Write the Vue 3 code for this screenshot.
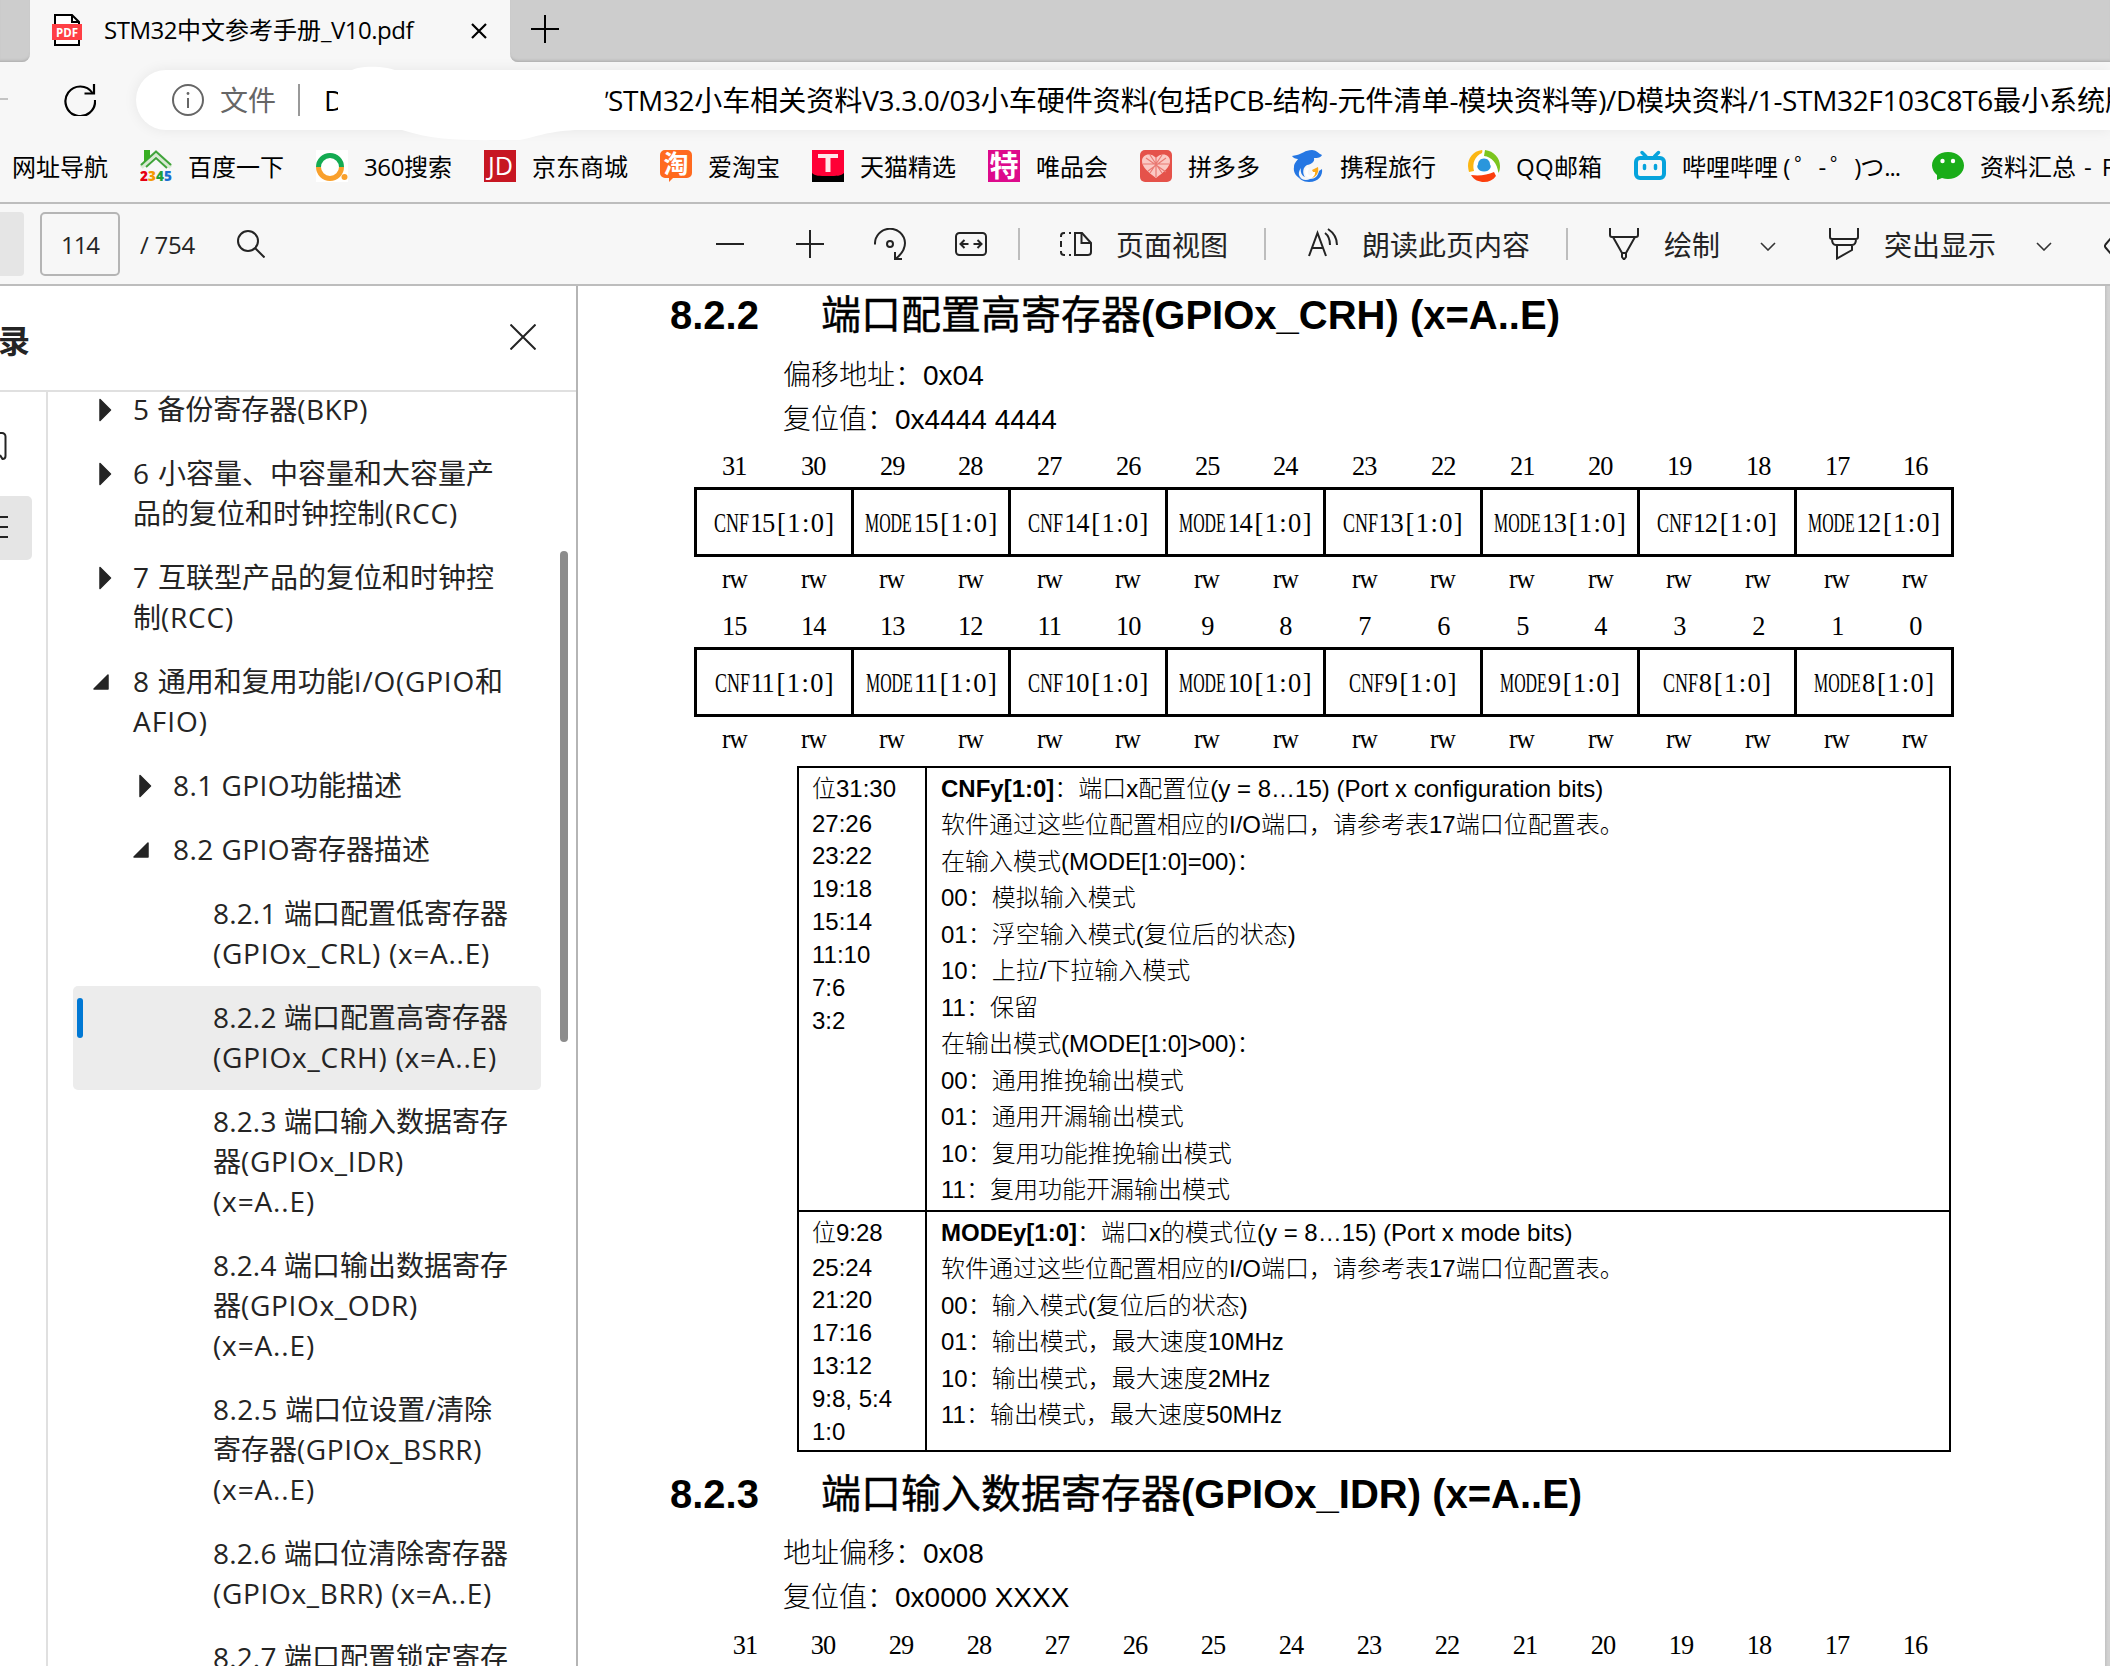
<script setup>
import { h, ref, onMounted } from 'vue'

// Text run whose Latin letters are tracked so that the line takes `w` pixels.
const Fit = {
  props: { t: String, w: Number },
  setup(props) {
    const el = ref(null)
    const parts = props.t.match(/[\x20-\x7e]+|[^\x20-\x7e]+/g)
    onMounted(() => {
      if (!props.w) return
      const spans = [...el.value.children]
      const latin = spans.filter((s) => /^[\x20-\x7e]/.test(s.textContent))
      const count = latin.reduce((n, s) => n + s.textContent.length, 0)
      if (!count) return
      const gap = (props.w - el.value.getBoundingClientRect().width) / count
      latin.forEach((s) => { s.style.letterSpacing = gap + 'px' })
    })
    return () => h('span', { ref: el, style: { whiteSpace: 'pre', display: 'inline-block' } }, parts.map((p) => h('span', p)))
  },
}

const bookmarks = [
  { icon: null, t: '网址导航' },
  { icon: '2345', t: '百度一下' },
  { icon: '360', t: '360搜索', w: 88 },
  { icon: 'jd', t: '京东商城' },
  { icon: 'tao', t: '爱淘宝' },
  { icon: 'tmall', t: '天猫精选' },
  { icon: 'vip', t: '唯品会' },
  { icon: 'pdd', t: '拼多多' },
  { icon: 'ctrip', t: '携程旅行' },
  { icon: 'qq', t: 'QQ邮箱', w: 86 },
  { icon: 'bili', t: '哔哩哔哩 ( ゜- ゜)つ...', w: 218 },
  { icon: 'wx', t: '资料汇总 - F', w: 136 },
]

const tree = [
  { lv: 1, a: 'c', lines: [['5 备份寄存器(BKP)', 235]] },
  { lv: 1, a: 'c', lines: [['6 小容量、中容量和大容量产', 361], ['品的复位和时钟控制(RCC)', 325]] },
  { lv: 1, a: 'c', lines: [['7 互联型产品的复位和时钟控', 361], ['制(RCC)', 101]] },
  { lv: 1, a: 'o', lines: [['8 通用和复用功能I/O(GPIO和', 370], ['AFIO)', 75]] },
  { lv: 2, a: 'c', lines: [['8.1 GPIO功能描述', 229]] },
  { lv: 2, a: 'o', lines: [['8.2 GPIO寄存器描述', 257]] },
  { lv: 3, lines: [['8.2.1 端口配置低寄存器', 295], ['(GPIOx_CRL) (x=A..E)', 277]] },
  { lv: 3, sel: true, lines: [['8.2.2 端口配置高寄存器', 295], ['(GPIOx_CRH) (x=A..E)', 284]] },
  { lv: 3, lines: [['8.2.3 端口输入数据寄存', 295], ['器(GPIOx_IDR)', 191], ['(x=A..E)', 102]] },
  { lv: 3, lines: [['8.2.4 端口输出数据寄存', 295], ['器(GPIOx_ODR)', 205], ['(x=A..E)', 102]] },
  { lv: 3, lines: [['8.2.5 端口位设置/清除', 279], ['寄存器(GPIOx_BSRR)', 269], ['(x=A..E)', 102]] },
  { lv: 3, lines: [['8.2.6 端口位清除寄存器', 295], ['(GPIOx_BRR) (x=A..E)', 279]] },
  { lv: 3, lines: [['8.2.7 端口配置锁定寄存', 295]] },
]

const range = (from) => Array.from({ length: 16 }, (_, i) => from - i)
const registers = [
  { bits: range(31), fields: [15, 14, 13, 12] },
  { bits: range(15), fields: [11, 10, 9, 8] },
]
const cells = (nums) => nums.flatMap((n) => [['CNF', n], ['MODE', n]])

const desc = [
  {
    bits: ['位31:30', '27:26', '23:22', '19:18', '15:14', '11:10', '7:6', '3:2'],
    name: 'CNFy[1:0]', title: '：端口x配置位(y = 8…15) (Port x configuration bits)',
    body: ['软件通过这些位配置相应的I/O端口，请参考表17端口位配置表。', '在输入模式(MODE[1:0]=00)：', '00：模拟输入模式', '01：浮空输入模式(复位后的状态)', '10：上拉/下拉输入模式', '11：保留', '在输出模式(MODE[1:0]>00)：', '00：通用推挽输出模式', '01：通用开漏输出模式', '10：复用功能推挽输出模式', '11：复用功能开漏输出模式'],
  },
  {
    bits: ['位9:28', '25:24', '21:20', '17:16', '13:12', '9:8, 5:4', '1:0'],
    name: 'MODEy[1:0]', title: '：端口x的模式位(y = 8…15) (Port x mode bits)',
    body: ['软件通过这些位配置相应的I/O端口，请参考表17端口位配置表。', '00：输入模式(复位后的状态)', '01：输出模式，最大速度10MHz', '10：输出模式，最大速度2MHz', '11：输出模式，最大速度50MHz'],
  },
]
</script>

<template>
  <div class="window">
    <div class="tabs">
      <div class="tab-prev"></div>
      <div class="tab">
        <svg class="pdf" width="30" height="32" viewBox="0 0 30 32">
          <path d="M3 1h17l7 7v23H3z" fill="#fff" stroke="#000" stroke-width="2" />
          <path d="M20 1v7h7" fill="none" stroke="#000" stroke-width="2" />
          <rect x="0" y="10" width="30" height="16" fill="#ff3f45" />
          <text x="15" y="22.5" text-anchor="middle" font-family="Open Sans, sans-serif" font-weight="700" font-size="11.5" fill="#fff">PDF</text>
        </svg>
        <Fit class="tab-title" t="STM32中文参考手册_V10.pdf" :w="309" />
        <svg class="tab-close" width="16" height="16" viewBox="0 0 16 16"><path d="M1 1l14 14M15 1L1 15" stroke="#000" stroke-width="2.2" /></svg>
      </div>
      <div class="tab-rest">
        <svg width="28" height="28" viewBox="0 0 28 28"><path d="M14 0v28M0 14h28" stroke="#000" stroke-width="2" /></svg>
      </div>
    </div>

    <div class="address">
      <span class="back"></span>
      <svg class="reload" width="32" height="32" viewBox="0 0 32 32" fill="none" stroke="#000" stroke-width="2.2">
        <path d="M28.5 9A14.8 14.8 0 1 0 31 16" /><path d="M30 0v9.5h-9.5" />
      </svg>
      <div class="pill">
        <svg width="32" height="32" viewBox="0 0 32 32"><circle cx="16" cy="16" r="15" fill="none" stroke="#666" stroke-width="2" /><path d="M16 14v10" stroke="#666" stroke-width="2" /><circle cx="16" cy="9.5" r="1.4" fill="#666" /></svg>
        <span class="scheme">文件</span>
        <i class="pill-sep"></i>
        <span class="drive">D</span>
        <span class="tick">'</span>
        <Fit class="url" t="STM32小车相关资料V3.3.0/03小车硬件资料(包括PCB-结构-元件清单-模块资料等)/D模块资料/1-STM32F103C8T6最小系统版" :w="1525" />
        <svg class="smear" width="240" height="76" viewBox="0 0 240 76"><path d="M9 6C16 -1 46 -1 60 6zM62 64C100 76 130 74 180 74C200 70 205 66 235 64z" fill="#fff" /></svg>
      </div>
    </div>

    <div class="bookmarks">
      <div v-for="b in bookmarks" :key="b.t" class="bm">
        <svg v-if="b.icon" width="32" height="32" viewBox="0 0 32 32">
          <template v-if="b.icon === '2345'">
            <path d="M1 17L16 3L31 17" fill="none" stroke="#d9ead3" stroke-width="5" />
            <path d="M1 15L16 1.500L31 15M6 17L16 8L27 18" fill="none" stroke="#3fa33a" stroke-width="2" />
            <path d="M4 0h6v7l-6 5z" fill="#37ae22" />
            <g font-family="Open Sans, sans-serif" font-weight="800" font-size="13.500"><text x="0" y="30.500" fill="#e60012">2</text><text x="8" y="30.500" fill="#f39800">3</text><text x="16" y="30.500" fill="#22a038">4</text><text x="24" y="30.500" fill="#1b6fd0">5</text></g>
          </template>
          <template v-else-if="b.icon === '360'">
            <rect width="32" height="32" fill="#fff" />
            <path d="M2.500 17a11.500 11.500 0 0 1 23 0" fill="none" stroke="#14ab52" stroke-width="5" />
            <path d="M2.500 17a11.500 11.500 0 0 0 23 0" fill="none" stroke="#f9a02c" stroke-width="5" />
            <circle cx="28.500" cy="27" r="3" fill="#f9a02c" />
          </template>
          <template v-else-if="b.icon === 'jd'">
            <rect width="32" height="32" fill="#c71622" />
            <text x="16.500" y="25" text-anchor="middle" font-family="Open Sans, sans-serif" font-size="25" textLength="25" lengthAdjust="spacingAndGlyphs" fill="#fff">JD</text>
          </template>
          <template v-else-if="b.icon === 'tao'">
            <path d="M5 0h22a5 5 0 0 1 5 5v18a5 5 0 0 1-5 5H13l-4 4v-4H5a5 5 0 0 1-5-5V5a5 5 0 0 1 5-5z" fill="#ff6a1f" />
            <text x="16" y="23" text-anchor="middle" font-family="Noto Sans CJK SC, sans-serif" font-weight="700" font-size="25" fill="#fff">淘</text>
          </template>
          <template v-else-if="b.icon === 'tmall'">
            <rect width="32" height="32" fill="#ff0036" /><path d="M0 23c3 3 7 3 16 3s13 0 16-3v9H0z" fill="#000" />
            <path d="M6 4h20v4h-7.500v14h-5V8H6z" fill="#ffe6ea" />
          </template>
          <template v-else-if="b.icon === 'vip'">
            <rect width="32" height="32" fill="#dd0a8c" />
            <text x="16" y="27" text-anchor="middle" font-family="Noto Sans CJK SC, sans-serif" font-weight="700" font-size="29" fill="#fff">特</text>
          </template>
          <template v-else-if="b.icon === 'pdd'">
            <rect width="32" height="32" rx="5" fill="#e5524a" />
            <path d="M16 28C8 22 2 17 2 11C2 4 11 2 16 8C21 2 30 4 30 11C30 17 24 22 16 28z" fill="#fbc9c4" />
            <path d="M6 8l20 14M26 8L8 21M16 8v19M3 14h26M10 5l12 18M22 5L10 23" stroke="#e97a73" stroke-width="1.200" fill="none" />
          </template>
          <template v-else-if="b.icon === 'ctrip'">
            <path d="M0 6L5 5C10 4 13 0 20 0C24 0 26 3 30 5C29 7.500 26 8 22 8C23 12 19 14.500 15 15C11 17 10 23 13 27C10 26 8 22 9 18C6 22 6 26 10 29C4 27 1 22 2 17C2 13 5 11 6 9C4 9 1 8 0 6z" fill="#2577e3" />
            <path d="M5 25C9 30 14 31 18 29C23 29 26 26 27 21L30 19C31 25 27 32 17 32C11 32 7 29 5 25z" fill="#2577e3" />
            <path d="M20 20l6-3c1 5-1 9-6 11 2-3 2-5 0-8z" fill="#fba91a" />
            <path d="M16 18c-2 3-2 6 0 8 3 2 6 0 6-4" fill="none" stroke="#fff" stroke-width="2.500" />
          </template>
          <template v-else-if="b.icon === 'qq'">
            <circle cx="16" cy="16" r="16" fill="#fff" />
            <path d="M14 0C5 1 0 8 0 16c0 2 .500 4 1 6l5-1C4 13 7 6 14 3C14 2 15 1 14 0z" fill="#fbb614" />
            <path d="M17 0c9 1 15 8 15 16 0 3-.500 5-1.500 7C29 13 24 7 16 6z" fill="#7cc51f" />
            <path d="M3 25c9 1 16 0 23-3l2 4c-3 4-7 6-12 6s-10-2-13-7z" fill="#fb3f0d" />
            <path d="M16 8.500c4 0 6 3 6 6 1 1 1 3 0 4-1 2-3 3-6 3s-5-1-6-3c-1-1-1-3 0-4 0-3 2-6 6-6z" fill="#2a96dc" />
          </template>
          <template v-else-if="b.icon === 'bili'">
            <path d="M8 2.500l4 4M24.500 2.500l-4 4" stroke="#06a3dc" stroke-width="3.500" stroke-linecap="round" />
            <rect x="2" y="8" width="28" height="20" rx="4" fill="none" stroke="#06a3dc" stroke-width="4" />
            <path d="M10.500 15.500v3M21.500 15.500v3" stroke="#06a3dc" stroke-width="3.500" stroke-linecap="round" />
          </template>
          <template v-else>
            <path d="M16 2C25 2 32 8 32 15.500S25 29 16 29c-2 0-4-.300-6-1l-5 2v-5C2 22.500 0 19 0 15.500C0 8 7 2 16 2z" fill="#1aad19" />
            <circle cx="10.500" cy="11" r="2.200" fill="#fff" /><circle cx="21" cy="11" r="2.200" fill="#fff" />
          </template>
        </svg>
        <Fit :t="b.t" :w="b.w" />
      </div>
    </div>

    <div class="toolbar">
      <div class="tb left">
        <span class="stub"></span>
        <span class="page">114</span>
        <Fit class="total" t="/ 754" :w="55" />
        <svg class="find" width="28" height="28" viewBox="0 0 28 28" fill="none" stroke="#242424" stroke-width="2"><circle cx="11" cy="11" r="10" /><path d="M18 18l9.500 9.500" /></svg>
      </div>
      <div class="tb mid">
        <svg width="28" height="28" viewBox="0 0 28 28"><path d="M0 14h28" stroke="#242424" stroke-width="2" /></svg>
        <svg class="zoomin" width="28" height="28" viewBox="0 0 28 28"><path d="M14 0v28M0 14h28" stroke="#242424" stroke-width="2" /></svg>
        <svg class="rotate" width="32" height="32" viewBox="0 0 32 32" fill="none" stroke="#242424" stroke-width="2"><path d="M1 16.500A15 15 0 0 1 31 15C31 21 27 26.500 22 30.500" /><path d="M21 24v7h7" /><circle cx="16" cy="16" r="3" /></svg>
        <svg class="fitw" width="32" height="24" viewBox="0 0 32 24" fill="none" stroke="#242424" stroke-width="2"><rect x="1" y="1" width="30" height="22" rx="3.500" /><path d="M13.500 12H6M9.500 8L5.500 12l4 4M18.500 12H26M22.500 8l4 4-4 4" /></svg>
        <i class="sep s1"></i>
        <svg class="pv" width="32" height="24" viewBox="0 0 32 24" fill="none" stroke="#242424" stroke-width="2"><path d="M15 1v22h13a3 3 0 0 0 3-3V11L22 1z" /><path d="M21.500 1v10H31" /><path d="M11 1H9M5 1H4a3 3 0 0 0-3 3v1M1 9v6M1 19v1a3 3 0 0 0 3 3h1M9 23h2" /></svg>
        <span class="lb l1">页面视图</span>
        <i class="sep s2"></i>
        <svg class="read" width="32" height="32" viewBox="0 0 32 32" fill="none" stroke="#242424" stroke-width="2"><path d="M1 28L9.500 5L18 28M4 20h11M17 5c4 3 5 7 5 12M20 1c6 4 9 9 9 16" /></svg>
        <span class="lb l2">朗读此页内容</span>
        <i class="sep s3"></i>
        <svg class="draw" width="30" height="32" viewBox="0 0 30 32" fill="none" stroke="#242424" stroke-width="2"><path d="M1 0v7c0 1.500 1 2 2 2h24c1 0 2-.500 2-2V0M4 9l9 16h4l9-16M13 25v4l2 2.500 2-2.500v-4" /></svg>
        <span class="lb l3">绘制</span>
        <svg class="chev c1" width="16" height="9" viewBox="0 0 16 9"><path d="M1 1l7 7 7-7" fill="none" stroke="#333" stroke-width="1.600" /></svg>
        <svg class="hl" width="30" height="32" viewBox="0 0 30 32" fill="none" stroke="#242424" stroke-width="2"><path d="M1 0v9c0 1 1 2 2 2h24c1 0 2-1 2-2V0M3 11c0 4 1 6 4 6h16c3 0 4-2 4-6M8 17v13.500l15-8.500v-5" /></svg>
        <span class="lb l4">突出显示</span>
        <svg class="chev c2" width="16" height="9" viewBox="0 0 16 9"><path d="M1 1l7 7 7-7" fill="none" stroke="#333" stroke-width="1.600" /></svg>
        <svg class="erase" width="6" height="18" viewBox="0 0 6 18"><path d="M7 1L1.500 7.500c-.800 1-.800 2 0 3L7 17" fill="none" stroke="#242424" stroke-width="2" /></svg>
      </div>
    </div>

    <div class="main">
      <aside class="side">
        <div class="side-head">
          <span class="side-title">目录</span>
          <svg width="26" height="26" viewBox="0 0 26 26"><path d="M.500 .500l25 25M25.500 .500l-25 25" stroke="#242424" stroke-width="2" /></svg>
        </div>
        <div class="side-body">
          <div class="rail">
            <svg class="thumb-ic" width="7" height="28" viewBox="0 0 7 28"><path d="M0 1h2a3.500 3.500 0 0 1 3.500 3.500V24a3 3 0 0 1-3 3L0 23" fill="none" stroke="#242424" stroke-width="2" /></svg>
            <div class="rail-sel"><svg width="8" height="24" viewBox="0 0 8 24"><path d="M0 2h8M0 12h8M0 22h8" stroke="#242424" stroke-width="2" /></svg></div>
          </div>
          <div class="tree">
            <div v-for="(n, i) in tree" :key="i" class="node" :class="['lv' + n.lv, { sel: n.sel }]">
              <span class="arrow">
                <svg v-if="n.a === 'c'" class="ac" width="13" height="24" viewBox="0 0 13 24"><path d="M1 1.500L11.500 12L1 22.500z" fill="#242424" stroke="#242424" stroke-width="1.500" stroke-linejoin="round" /></svg>
                <svg v-else-if="n.a === 'o'" class="ao" width="16" height="16" viewBox="0 0 16 16"><path d="M15 1v14H1z" fill="#242424" stroke="#242424" stroke-width="1.500" stroke-linejoin="round" /></svg>
              </span>
              <div class="lines"><div v-for="l in n.lines" :key="l[0]" class="line"><Fit :t="l[0]" :w="l[1]" /></div></div>
            </div>
          </div>
          <div class="scroll"></div>
        </div>
      </aside>

      <section class="doc">
        <h2><span class="num">8.2.2</span><span class="han">端口配置高寄存器</span>(GPIOx_CRH) (x=A..E)</h2>
        <div class="info"><div>偏移地址：0x04</div><div>复位值：0x4444 4444</div></div>
        <div class="regs">
          <div v-for="(r, i) in registers" :key="i" class="reg">
            <div class="bits"><span v-for="b in r.bits" :key="b">{{ b }}</span></div>
            <div class="boxes">
              <div v-for="c in cells(r.fields)" :key="c[0] + c[1]" class="box"><span class="mn" :class="c[0].toLowerCase()">{{ c[0] }}</span><span class="ix">{{ c[1] }}</span><span class="rg">[1:0]</span></div>
            </div>
            <div class="rw"><span v-for="b in r.bits" :key="b">rw</span></div>
          </div>
        </div>
        <div class="desc">
          <div v-for="d in desc" :key="d.name" class="drow">
            <div class="dl"><div v-for="b in d.bits" :key="b">{{ b }}</div></div>
            <div class="dr">
              <div><b>{{ d.name }}</b>{{ d.title }}</div>
              <div v-for="b in d.body" :key="b">{{ b }}</div>
            </div>
          </div>
        </div>
        <h2 class="second"><span class="num">8.2.3</span><span class="han">端口输入数据寄存器</span>(GPIOx_IDR) (x=A..E)</h2>
        <div class="info"><div>地址偏移：0x08</div><div>复位值：0x0000 XXXX</div></div>
        <div class="bits tail"><span v-for="b in range(31)" :key="b">{{ b }}</span></div>
      </section>
      <div class="gutter"></div>
    </div>
  </div>
</template>

<style>
body { margin: 0; overflow: hidden; }
</style>

<style scoped>
.window { width: 2110px; height: 1666px; overflow: hidden; background: #f7f7f7; display: flex; flex-direction: column; font-family: "Open Sans", "Noto Sans CJK SC", sans-serif; color: #000; }
svg { display: block; flex: none; }
.tabs { height: 62px; flex: none; display: flex; background: #f7f7f7; }
.tab-prev { width: 30px; background: #cdcdcd; border-radius: 0 0 8px 0; box-shadow: inset 0 -3px 3px -2px #aaa; }
.tab { width: 480px; display: flex; align-items: flex-start; box-sizing: border-box; padding-left: 22px; background: #f7f7f7; }
.pdf { margin-top: 14px; }
.tab-title { margin-left: 22px; font-size: 24px; line-height: 59px; }
.tab-close { margin: 23px 0 0 58px; }
.tab-rest { flex: 1; background: #cdcdcd; border-radius: 0 0 0 8px; box-shadow: inset 0 -3px 3px -2px #aaa; padding: 15px 0 0 21px; }
.address { height: 76px; flex: none; display: flex; padding-top: 8px; box-sizing: border-box; }
.back { width: 8px; height: 2px; background: #c4c4c4; margin-top: 28px; }
.reload { margin: 14px 0 0 56px; }
.pill { margin-left: 40px; flex: 1; height: 60px; background: #fff; border-radius: 30px 0 0 30px; display: flex; align-items: center; padding-left: 36px; box-shadow: 0 0 14px rgba(0,0,0,.07); position: relative; white-space: nowrap; font-size: 28px; line-height: 60px; min-width: 0; }
.scheme { flex: none; width: 56px; margin-left: 16px; color: #666; }
.pill-sep { flex: none; width: 2px; height: 32px; background: #999; margin-left: 22px; }
.drive { flex: none; width: 14px; margin-left: 24px; overflow: hidden; }
.tick { flex: none; width: 6px; margin-left: 265px; font-size: 24px; line-height: 58px; transform: skewX(-12deg); }
.url { flex: none; margin-left: -1px; }
.smear { position: absolute; left: 204px; top: -4px; }
.bookmarks { height: 64px; flex: none; padding-left: 12px; display: flex; align-items: center; gap: 32px; white-space: nowrap; font-size: 24px; line-height: 55px; overflow: hidden; border-bottom: 2px solid #bdbdbd; }
.bm { display: flex; align-items: center; gap: 16px; flex: none; margin-bottom: 8px; }
.toolbar { height: 80px; flex: none; border-bottom: 2px solid #bdbdbd; display: flex; color: #242424; }
.tb { display: flex; align-items: center; }
.left { width: 716px; }
.stub { width: 24px; height: 64px; background: #e5e5e5; border-radius: 0 4px 4px 0; }
.page { width: 76px; height: 60px; border: 2px solid #b5b5b5; border-radius: 5px; margin-left: 16px; font-size: 24px; line-height: 62px; text-align: center; letter-spacing: -1px; }
.total { margin-left: 20px; font-size: 24px; line-height: 60px; padding-top: 2px; }
.find { margin-left: 42px; }
.mid { flex: 1; overflow: hidden; white-space: nowrap; }
.zoomin { margin-left: 52px; }
.rotate { margin-left: 50px; }
.fitw { margin-left: 49px; }
.sep { width: 2px; height: 32px; background: #bdbdbd; flex: none; }
.s1 { margin-left: 31px; }
.pv { margin-left: 40px; }
.lb { font-size: 28px; line-height: 60px; flex: none; padding-top: 2px; }
.l1 { margin-left: 24px; width: 112px; }
.s2 { margin-left: 36px; }
.read { margin-left: 42px; }
.l2 { margin-left: 22px; width: 168px; }
.s3 { margin-left: 36px; }
.draw { margin-left: 41px; }
.l3 { margin-left: 25px; width: 56px; }
.c1 { margin-left: 40px; margin-top: 4px; }
.hl { margin-left: 53px; }
.l4 { margin-left: 25px; width: 112px; }
.c2 { margin-left: 40px; margin-top: 4px; }
.erase { margin-left: 52px; margin-top: 4px; }
.main { flex: 1; display: flex; min-height: 0; background: #fff; }
.side { width: 576px; border-right: 2px solid #b5b5b5; flex: none; display: flex; flex-direction: column; color: #242424; }
.side-head { height: 104px; border-bottom: 2px solid #e0e0e0; flex: none; display: flex; justify-content: space-between; padding-right: 40px; }
.side-title { margin-left: -34px; font-size: 32px; font-weight: 700; line-height: 109px; }
.side-head svg { margin-top: 38px; }
.side-body { flex: 1; display: flex; min-height: 0; }
.rail { width: 46px; border-right: 2px solid #e0e0e0; flex: none; }
.thumb-ic { margin-top: 40px; }
.rail-sel { margin-top: 36px; width: 32px; height: 64px; background: #e5e5e5; border-radius: 0 5px 5px 0; display: flex; padding-top: 19px; box-sizing: border-box; }
.tree { width: 468px; margin-left: 25px; overflow: hidden; flex: none; font-size: 28px; line-height: 39px; white-space: nowrap; }
.node { display: flex; padding: 12px 0; border-radius: 5px; position: relative; }
.node:first-child { margin-top: -14px; }
.sel { background: #ececec; }
.sel::before { content: ""; position: absolute; left: 4px; top: 12px; width: 6px; height: 40px; border-radius: 3px; background: #0078d4; }
.arrow { flex: none; box-sizing: border-box; }
.lv1 .arrow { width: 60px; padding-left: 20px; }
.lv2 .arrow { width: 100px; padding-left: 60px; }
.lv3 .arrow { width: 140px; }
.ac { margin: 8px 0 0 6px; }
.ao { margin: 12px 0 0 0; }
.line { height: 40px; }
.scroll { width: 8px; height: 491px; margin: 159px 0 0 19px; border-radius: 4px; background: #8c8c8c; }
.doc { flex: 1; min-width: 0; padding-top: 5px; font-family: "Liberation Sans", "Noto Sans CJK SC", sans-serif; overflow: hidden; height: 1375px; }
.doc h2 { margin: 0; padding-left: 92px; font-size: 40px; line-height: 48px; font-weight: 700; display: flex; white-space: pre; }
.num { width: 151px; }
.han { font-weight: 400; -webkit-text-stroke: .4px #000; }
.info { margin: 15px 0 0 205px; font-size: 28px; line-height: 44px; font-weight: 300; white-space: pre; }
.regs { margin: 4px 0 0 116px; width: 1260px; }
.reg { height: 160px; }
.bits, .rw { display: grid; grid-template-columns: repeat(16, 1fr); text-align: center; font-family: "Liberation Serif", serif; font-size: 28px; line-height: 40px; letter-spacing: -1px; }
.bits { height: 41px; }
.bits span { padding-left: 2px; transform: scaleX(.94); }
.rw span { transform: scaleX(.94); }
.rw { font-size: 27px; padding-top: 2px; padding-left: 1px; }
.boxes { display: grid; grid-template-columns: repeat(8, 1fr); height: 70px; box-sizing: border-box; border: 3px solid #000; border-right-width: 0; font-family: "Liberation Serif", serif; font-size: 26.5px; line-height: 67px; }
.box { border-right: 3px solid #000; display: flex; justify-content: center; }
.mn { transform-origin: 0 50%; }
.cnf { width: 36px; transform: scaleX(.68); }
.mode { width: 48px; transform: scaleX(.6); }
.ix { letter-spacing: -1.25px; }
.rg { width: 60px; letter-spacing: 1.4px; text-indent: 3px; }
.desc { width: 1150px; margin-left: 219px; border: 2px solid #000; font-size: 24px; font-weight: 300; white-space: pre; }
.desc b { font-weight: 700; }
.drow { display: flex; height: 442px; }
.drow + .drow { border-top: 2px solid #000; height: 238px; }
.dl { width: 128px; box-sizing: border-box; padding: 4px 0 0 13px; border-right: 2px solid #000; line-height: 32.9px; }
.dl div:first-child { line-height: 34px; margin-bottom: 1.5px; }
.dr { padding: 2.5px 0 0 14px; line-height: 36.500px; }
.second { padding-top: 17.5px !important; }
.second + .info { margin-top: 14.5px; }
.tail { margin: 5px 0 0 127px; width: 1248px; }
.gutter { width: 5px; background: linear-gradient(90deg, #c2c2c2, #d2d2d2 60%); flex: none; }
</style>
